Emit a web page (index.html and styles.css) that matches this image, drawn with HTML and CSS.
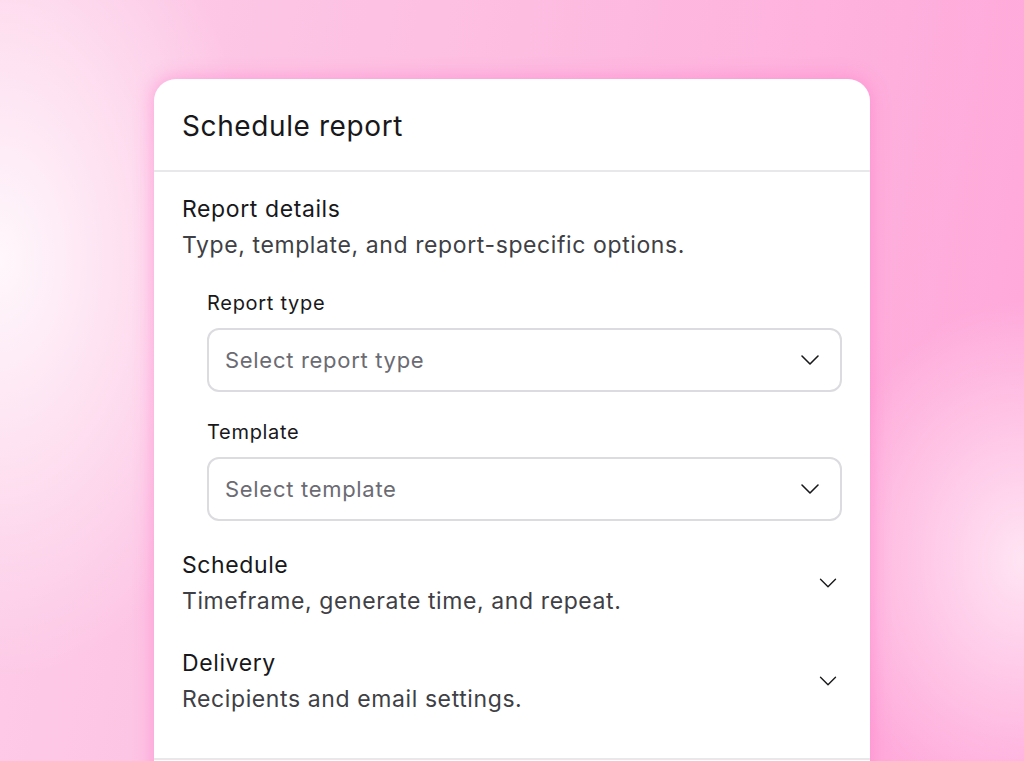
FILE: index.html
```html
<!DOCTYPE html>
<html lang="en">
<head>
    <meta charset="UTF-8">
    <meta name="viewport" content="width=device-width, initial-scale=1.0">
    <title>Schedule report</title>
    <link rel="stylesheet" href="styles.css">
</head>
<body>
    <div class="card">
        <div class="card-header">
            <h1>Schedule report</h1>
        </div>
        <div class="card-body">
            <div class="section">
                <div class="section-text">
                    <h2>Report details</h2>
                    <p>Type, template, and report-specific options.</p>
                </div>
            </div>
            <div class="fields">
                <div class="field">
                    <label>Report type</label>
                    <div class="select">
                        <span>Select report type</span>
                        <svg width="32" height="32" viewBox="0 0 24 24" fill="none" stroke="#18181b" stroke-width="1.2" stroke-linecap="round" stroke-linejoin="round"><path d="M6 9l6 6 6-6"/></svg>
                    </div>
                </div>
                <div class="field">
                    <label>Template</label>
                    <div class="select">
                        <span>Select template</span>
                        <svg width="32" height="32" viewBox="0 0 24 24" fill="none" stroke="#18181b" stroke-width="1.2" stroke-linecap="round" stroke-linejoin="round"><path d="M6 9l6 6 6-6"/></svg>
                    </div>
                </div>
            </div>
            <div class="section collapsed">
                <div class="section-text">
                    <h2>Schedule</h2>
                    <p>Timeframe, generate time, and repeat.</p>
                </div>
                <svg width="30" height="30" viewBox="0 0 24 24" fill="none" stroke="#18181b" stroke-width="1.1" stroke-linecap="round" stroke-linejoin="round"><path d="M6 9l6 6 6-6"/></svg>
            </div>
            <div class="section collapsed">
                <div class="section-text">
                    <h2>Delivery</h2>
                    <p>Recipients and email settings.</p>
                </div>
                <svg width="30" height="30" viewBox="0 0 24 24" fill="none" stroke="#18181b" stroke-width="1.1" stroke-linecap="round" stroke-linejoin="round"><path d="M6 9l6 6 6-6"/></svg>
            </div>
        </div>
        <div class="card-footer"></div>
    </div>
</body>
</html>
```

FILE: styles.css
```css
html, body {
    height: 100%;
}
body {
    margin: 0;
    overflow: hidden;
    font-family: Inter, "Liberation Sans", sans-serif;
    color: #18181b;
    background:
        radial-gradient(ellipse 260px 420px at 0px 260px, rgba(255, 255, 255, 0.85), rgba(255, 255, 255, 0) 100%),
        radial-gradient(ellipse 200px 260px at 1024px 560px, rgba(255, 255, 255, 0.7), rgba(255, 255, 255, 0) 100%),
        linear-gradient(100deg, #fdcde8 0%, #fdbde1 45%, #ffa6d9 100%);
    padding-top: 79px;
    box-sizing: border-box;
}
.card {
    width: 716px;
    margin: 0 auto;
    background: #fff;
    border-radius: 22px 22px 0 0;
    box-shadow: 0 0 18px 2px rgba(255, 110, 200, 0.45);
}
.card-header {
    padding: 2px 28px 0 28px;
    height: 89px;
    display: flex;
    align-items: center;
    border-bottom: 2px solid #e8e8ea;
}
.card-header h1 {
    margin: 0;
    font-size: 28px;
    font-weight: 400;
    letter-spacing: 0.6px;
}
.card-body {
    padding: 19px 28px 41px 28px;
}
.section {
    display: flex;
    align-items: center;
    justify-content: space-between;
}
.section.collapsed {
    margin-top: 26px;
}
.section.collapsed svg {
    margin: 0 -1px 0 0;
}
.section h2 {
    margin: 0;
    font-size: 23px;
    font-weight: 400;
    line-height: 36px;
    letter-spacing: 0.6px;
}
.section p {
    margin: 0;
    font-size: 23px;
    line-height: 36px;
    letter-spacing: 0.6px;
    color: #3f3f46;
}
.fields {
    padding-left: 25px;
    margin-top: 27px;
    display: flex;
    flex-direction: column;
    gap: 27px;
}
.field {
    display: flex;
    flex-direction: column;
    gap: 12px;
}
.field label {
    font-size: 20px;
    font-weight: 400;
    line-height: 26px;
    letter-spacing: 0.7px;
    color: #18181b;
}
.select {
    height: 60px;
    border: 2px solid #dcdce0;
    border-radius: 12px;
    padding: 0 14px 0 16px;
    display: flex;
    align-items: center;
    justify-content: space-between;
}
.select span {
    font-size: 22px;
    letter-spacing: 0.7px;
    color: #6b6b73;
}
.card-footer {
    border-top: 2px solid #e8e8ea;
    height: 40px;
}
```
